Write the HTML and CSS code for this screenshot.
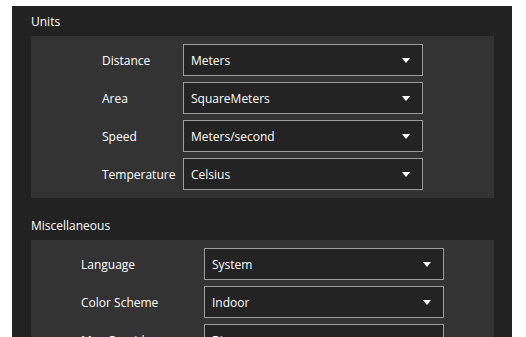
FILE: index.html
```html
<!DOCTYPE html>
<html>
<head>
<meta charset="utf-8">
<link rel="stylesheet" href="styles.css">
</head>
<body>
<div class="panel">
  <div class="heading">Units</div>
  <div class="group">
    <div class="grid units">
      <div class="label">Distance</div>
      <div class="combo"><span>Meters</span><i class="arrow"></i></div>
      <div class="label">Area</div>
      <div class="combo"><span>SquareMeters</span><i class="arrow"></i></div>
      <div class="label">Speed</div>
      <div class="combo"><span>Meters/second</span><i class="arrow"></i></div>
      <div class="label">Temperature</div>
      <div class="combo"><span>Celsius</span><i class="arrow"></i></div>
    </div>
  </div>
  <div class="heading gap">Miscellaneous</div>
  <div class="group">
    <div class="grid misc">
      <div class="label">Language</div>
      <div class="combo"><span>System</span><i class="arrow"></i></div>
      <div class="label">Color Scheme</div>
      <div class="combo"><span>Indoor</span><i class="arrow"></i></div>
      <div class="label">Map Provider</div>
      <div class="combo"><span>Bing</span><i class="arrow"></i></div>
    </div>
  </div>
</div>
</body>
</html>
```
FILE: styles.css
```css
html, body {
  margin: 0;
  padding: 0;
  background: #ffffff;
  height: 337px;
  overflow: hidden;
}
body {
  padding: 6px 14px 0 12px;
  font-family: "Open Sans", "Liberation Sans", sans-serif;
  font-size: 12px;
  color: #ffffff;
}
.panel {
  background: #222222;
  width: 500px;
  height: 400px;
  padding: 0 18px 0 19px;
  box-sizing: border-box;
}
.heading {
  height: 30px;
  line-height: 32px;
  box-sizing: border-box;
}
.heading.gap {
  margin-top: 12px;
}
.group {
  background: #333333;
  padding: 8px 0 8px 0;
  display: flex;
  justify-content: center;
}
.grid {
  display: grid;
  row-gap: 6px;
  align-items: center;
}
.units {
  grid-template-columns: 81px 240px;
}
.misc {
  grid-template-columns: 123px 240px;
}
.label {
  line-height: 16px;
  padding-top: 2px;
}
.combo {
  height: 32px;
  box-sizing: border-box;
  border: 1px solid #9c9c9c;
  background: #232323;
  display: flex;
  align-items: center;
  justify-content: space-between;
  padding: 0 12px 0 7px;
}
.arrow {
  width: 0;
  height: 0;
  border-left: 4px solid transparent;
  border-right: 4px solid transparent;
  border-top: 5px solid #ffffff;
}
```
